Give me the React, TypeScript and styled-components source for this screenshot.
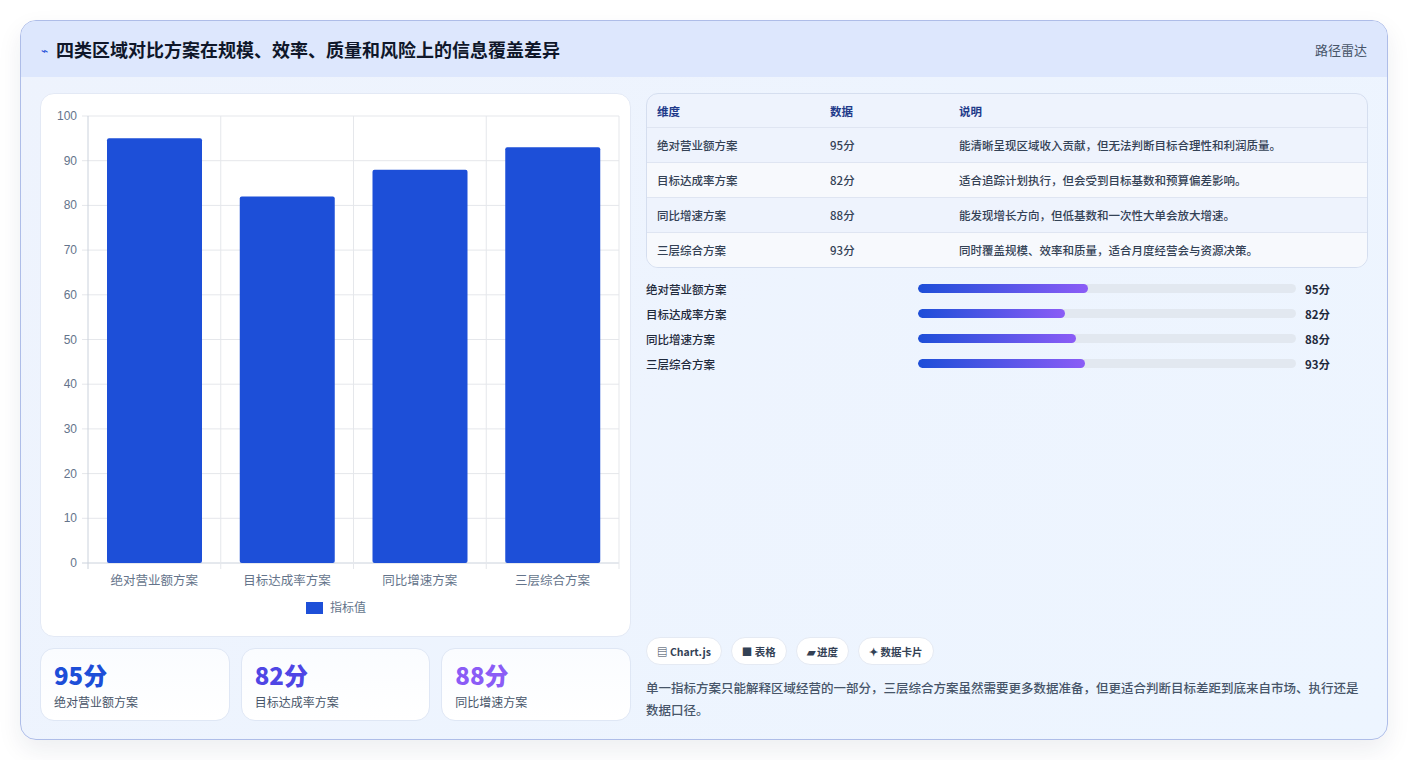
import React from 'react';
import styled, { createGlobalStyle } from 'styled-components';

const GlobalStyle = createGlobalStyle`
  html, body { margin: 0; padding: 0; background: #ffffff; }
  body { font-family: "Noto Sans CJK SC", "Noto Sans", sans-serif; }
  * { box-sizing: border-box; }
`;

const Page = styled.div`
  padding: 20px 20px 20px 20px;
  width: 1408px;
  height: 760px;
`;

const Card = styled.div`
  width: 1368px;
  height: 720px;
  border: 1px solid #aebde8;
  border-radius: 16px;
  overflow: hidden;
  background: linear-gradient(135deg, #eef3fd 0%, #edf5ff 100%);
  box-shadow: 0 10px 24px rgba(30, 41, 80, 0.08);
  display: flex;
  flex-direction: column;
`;

const Header = styled.div`
  height: 56px;
  background: #dde7fd;
  display: flex;
  align-items: center;
  justify-content: space-between;
  padding: 0 20px 0 20px;
`;

const Title = styled.h1`
  margin: 0;
  font-size: 18px;
  font-weight: 700;
  color: #0f172a;
  display: flex;
  align-items: center;
  gap: 8px;
`;

const TitleIcon = styled.span`
  color: #1d4ed8;
  font-size: 12px;
  font-weight: 400;
`;

const HeaderTag = styled.span`
  font-size: 13px;
  color: #475569;
`;

const Body = styled.div`
  flex: 1;
  display: grid;
  grid-template-columns: 591px 1fr;
  gap: 15px;
  padding: 16px 19px 18px 19px;
`;

const LeftCol = styled.div`
  display: flex;
  flex-direction: column;
  gap: 11px;
`;

const ChartCard = styled.div`
  height: 544px;
  background: #ffffff;
  border: 1px solid #e3e9f5;
  border-radius: 14px;
`;

const StatRow = styled.div`
  display: grid;
  grid-template-columns: repeat(3, 1fr);
  gap: 11px;
`;

const StatCard = styled.div`
  height: 73px;
  background: linear-gradient(180deg, #fafcff 0%, #ffffff 100%);
  border: 1px solid #dfe7f5;
  border-radius: 14px;
  padding: 10px 13px;
`;

const StatValue = styled.div<{ color: string }>`
  font-size: 24px;
  font-weight: 800;
  color: ${p => p.color};
  line-height: 32px;
`;

const StatLabel = styled.div`
  font-size: 12px;
  color: #475569;
  margin-top: 2px;
`;

const RightCol = styled.div`
  display: flex;
  flex-direction: column;
`;

const Table = styled.div`
  border: 1px solid #d5deef;
  border-radius: 12px;
  overflow: hidden;
  background: #eef3fd;
`;

const Row = styled.div<{ head?: boolean; alt?: boolean }>`
  display: grid;
  grid-template-columns: 173px 129px 1fr;
  height: ${p => (p.head ? 33 : 35)}px;
  align-items: center;
  padding: 0 10px;
  font-size: 11.5px;
  font-weight: ${p => (p.head ? 700 : 500)};
  color: ${p => (p.head ? '#1e3a8a' : '#334155')};
  background: ${p => (p.alt ? '#f7f9fd' : 'transparent')};
  border-top: ${p => (p.head ? 'none' : '1px solid #dfe5f2')};
`;

const Bars = styled.div`
  display: flex;
  flex-direction: column;
  gap: 8px;
  margin-top: 12px;
`;

const BarRow = styled.div`
  display: grid;
  grid-template-columns: 272px 378px 1fr;
  align-items: center;
  height: 17px;
  font-size: 11.5px;
  font-weight: 500;
  color: #1e293b;
`;

const Track = styled.div`
  height: 9px;
  border-radius: 5px;
  background: #e2e8f0;
  overflow: hidden;
`;

const Fill = styled.div`
  height: 100%;
  border-radius: 5px;
  background: linear-gradient(90deg, #1d4ed8 0%, #8b5cf6 100%);
`;

const BarValue = styled.span`
  padding-left: 9px;
  font-weight: 700;
`;

const Chips = styled.div`
  margin-top: auto;
  display: flex;
  gap: 9px;
`;

const Chip = styled.span`
  height: 28px;
  padding: 0 10px;
  border-radius: 14px;
  background: #ffffff;
  border: 1px solid #e5eaf3;
  font-size: 10.5px;
  font-weight: 700;
  color: #334155;
  display: inline-flex;
  align-items: center;
  gap: 4px;
`;

const Note = styled.p`
  margin: 12px 0 0 0;
  font-size: 12.5px;
  line-height: 22px;
  color: #475569;
  font-weight: 500;
`;

const data = [
  { name: '绝对营业额方案', value: 95, desc: '能清晰呈现区域收入贡献，但无法判断目标合理性和利润质量。' },
  { name: '目标达成率方案', value: 82, desc: '适合追踪计划执行，但会受到目标基数和预算偏差影响。' },
  { name: '同比增速方案', value: 88, desc: '能发现增长方向，但低基数和一次性大单会放大增速。' },
  { name: '三层综合方案', value: 93, desc: '同时覆盖规模、效率和质量，适合月度经营会与资源决策。' },
];

const BarChart: React.FC = () => {
  const left = 47, top = 22, w = 531, h = 447;
  const cw = w / 4;
  const ticks = [0, 10, 20, 30, 40, 50, 60, 70, 80, 90, 100];
  const font = '"Liberation Sans", "Noto Sans CJK SC", sans-serif';
  return (
    <svg width="591" height="544" viewBox="0 0 591 544">
      {ticks.map(t => {
        const y = top + h - (t / 100) * h;
        return (
          <g key={t}>
            <line x1={left - 6} x2={left + w} y1={y} y2={y} stroke={t === 0 ? '#cbd2dc' : '#e5e7eb'} />
            <text x={left - 11} y={y + 4} fontSize="12" fill="#64748b" textAnchor="end" fontFamily={font}>{t}</text>
          </g>
        );
      })}
      {[0, 1, 2, 3, 4].map(i => (
        <line key={i} x1={left + i * cw} x2={left + i * cw} y1={top} y2={top + h + 6} stroke={i === 0 ? '#cbd2dc' : '#e5e7eb'} />
      ))}
      {data.map((d, i) => {
        const bh = (d.value / 100) * h;
        return (
          <g key={d.name}>
            <rect x={left + i * cw + 19} y={top + h - bh} width={95} height={bh} rx="2" fill="#1d4fd8" />
            <text x={left + i * cw + cw / 2} y={top + h + 22} fontSize="12.5" fill="#64748b" textAnchor="middle" fontFamily={font}>{d.name}</text>
          </g>
        );
      })}
      <rect x="265" y="508" width="17" height="12" fill="#1d4fd8" />
      <text x="289" y="518" fontSize="12" fill="#64748b" fontFamily={font}>指标值</text>
    </svg>
  );
};

const App: React.FC = () => (
  <>
    <GlobalStyle />
    <Page>
      <Card>
        <Header>
          <Title><TitleIcon>⌁</TitleIcon>四类区域对比方案在规模、效率、质量和风险上的信息覆盖差异</Title>
          <HeaderTag>路径雷达</HeaderTag>
        </Header>
        <Body>
          <LeftCol>
            <ChartCard><BarChart /></ChartCard>
            <StatRow>
              <StatCard><StatValue color="#1d4ed8">95分</StatValue><StatLabel>绝对营业额方案</StatLabel></StatCard>
              <StatCard><StatValue color="#4f46e5">82分</StatValue><StatLabel>目标达成率方案</StatLabel></StatCard>
              <StatCard><StatValue color="#8b5cf6">88分</StatValue><StatLabel>同比增速方案</StatLabel></StatCard>
            </StatRow>
          </LeftCol>
          <RightCol>
            <Table>
              <Row head><span>维度</span><span>数据</span><span>说明</span></Row>
              {data.map((d, i) => (
                <Row key={d.name} alt={i % 2 === 1}>
                  <span>{d.name}</span><span>{d.value}分</span><span>{d.desc}</span>
                </Row>
              ))}
            </Table>
            <Bars>
              {data.map(d => (
                <BarRow key={d.name}>
                  <span>{d.name}</span>
                  <Track><Fill style={{ width: `${d.value * 0.474}%` }} /></Track>
                  <BarValue>{d.value}分</BarValue>
                </BarRow>
              ))}
            </Bars>
            <Chips>
              <Chip>▤ Chart.js</Chip>
              <Chip>■ 表格</Chip>
              <Chip>▰ 进度</Chip>
              <Chip>✦ 数据卡片</Chip>
            </Chips>
            <Note>单一指标方案只能解释区域经营的一部分，三层综合方案虽然需要更多数据准备，但更适合判断目标差距到底来自市场、执行还是数据口径。</Note>
          </RightCol>
        </Body>
      </Card>
    </Page>
  </>
);

export default App;
